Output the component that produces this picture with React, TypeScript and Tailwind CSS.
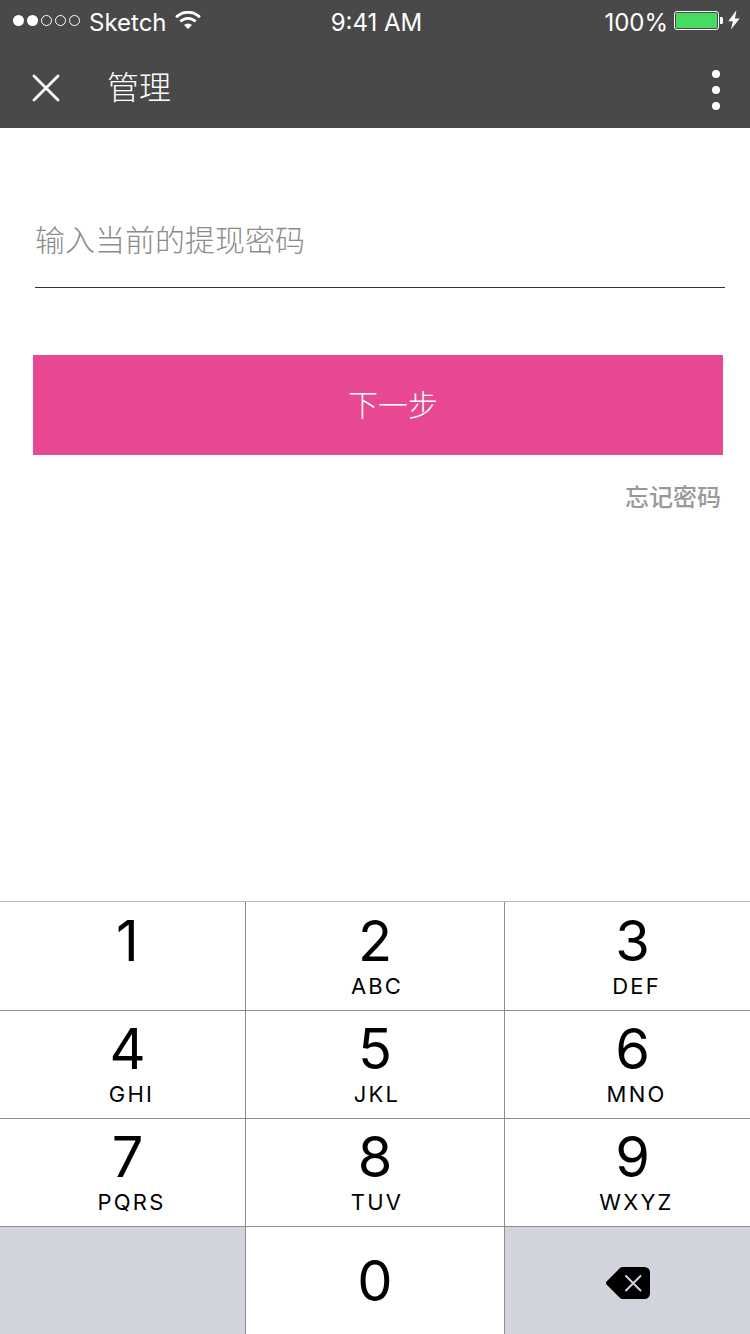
import React, { useState } from "react";

type KeyDef = { digit: string; letters?: string };

const KEYS: KeyDef[] = [
  { digit: "1" },
  { digit: "2", letters: "ABC" },
  { digit: "3", letters: "DEF" },
  { digit: "4", letters: "GHI" },
  { digit: "5", letters: "JKL" },
  { digit: "6", letters: "MNO" },
  { digit: "7", letters: "PQRS" },
  { digit: "8", letters: "TUV" },
  { digit: "9", letters: "WXYZ" },
];

function SignalDots() {
  return (
    <svg width="68" height="12" viewBox="0 0 68 12" aria-hidden="true">
      <circle cx="5.5" cy="6.5" r="5.5" fill="#fff" />
      <circle cx="19.5" cy="6.5" r="5.5" fill="#fff" />
      <circle cx="33.5" cy="6.5" r="5" fill="none" stroke="#fff" />
      <circle cx="47.5" cy="6.5" r="5" fill="none" stroke="#fff" />
      <circle cx="61.5" cy="6.5" r="5" fill="none" stroke="#fff" />
    </svg>
  );
}

function Wifi() {
  return (
    <svg width="26" height="19" viewBox="0 0 26 19" aria-hidden="true" fill="none" stroke="#fff">
      <path d="M1.200 6.200a16.800 16.800 0 0 1 23.600 0" strokeWidth="3" />
      <path d="M5.400 10.500a10.800 10.800 0 0 1 15.200 0" strokeWidth="2.800" />
      <path d="M13 18l-4-4a5.800 5.800 0 0 1 8 0z" fill="#fff" stroke="none" />
    </svg>
  );
}

function Battery() {
  return (
    <svg width="49" height="19" viewBox="0 0 49 19" aria-hidden="true">
      <rect x="0.5" y="0.5" width="44" height="18" rx="2.5" fill="none" stroke="#fff" />
      <rect x="2" y="2" width="41" height="15" rx="1" fill="#46dc61" />
      <path d="M46 6h1.500a1.500 1.500 0 0 1 1.500 1.500v4a1.500 1.500 0 0 1-1.500 1.500H46z" fill="#fff" />
    </svg>
  );
}

function Bolt() {
  return (
    <svg width="12" height="20" viewBox="0 0 12 20" aria-hidden="true">
      <path d="M8.400 0.300L0.300 11.200h4.600L2.900 19.600 11.700 8.400H7z" fill="#fff" />
    </svg>
  );
}

function StatusBar() {
  return (
    <div className="grid h-10 grid-cols-[1fr_auto_1fr] items-start pl-[13px] pr-[10px] text-2xl leading-8">
      <div className="flex items-start pt-[7px]">
        <div className="pt-[7px]">
          <SignalDots />
        </div>
        <span className="ml-2">Sketch</span>
        <div className="ml-2 pt-[4px]">
          <Wifi />
        </div>
      </div>
      <span className="pt-[7px]">9:41 AM</span>
      <div className="flex items-start justify-end pt-[7px]">
        <span>100%</span>
        <div className="ml-[6px] pt-[4px]">
          <Battery />
        </div>
        <div className="ml-[5px] pt-[3px]">
          <Bolt />
        </div>
      </div>
    </div>
  );
}

function Header() {
  return (
    <header className="bg-[#494949] text-white">
      <StatusBar />
      <div className="flex h-22 items-start pl-8 pr-[30px] pt-7">
        <button type="button" aria-label="关闭" className="mt-1.5 flex">
          <svg width="28" height="28" viewBox="0 0 28 28" aria-hidden="true">
            <path d="M2 2l24 24M26 2L2 26" stroke="#fff" strokeWidth="2.800" strokeLinecap="round" />
          </svg>
        </button>
        <h1 className="ml-[47px] text-[32px] leading-10 font-light">管理</h1>
        <button type="button" aria-label="更多" className="mt-0.5 ml-auto flex">
          <svg width="8" height="40" viewBox="0 0 8 40" aria-hidden="true" fill="#fff">
            <circle cx="4" cy="4" r="4" />
            <circle cx="4" cy="20" r="4" />
            <circle cx="4" cy="36" r="4" />
          </svg>
        </button>
      </div>
    </header>
  );
}

function Key({ def, column, onPress }: { def: KeyDef; column: number; onPress: (d: string) => void }) {
  const middle = column === 1;
  return (
    <button
      type="button"
      onClick={() => onPress(def.digit)}
      className={`flex flex-col items-center justify-end gap-px bg-white pb-3 text-black ${middle ? "" : "pl-[10px]"}`}
    >
      <span className="text-[56px] leading-[64px]">{def.digit}</span>
      <span className={`h-6 text-[22px] leading-6 tracking-widest ${middle ? "pl-1" : "pl-2"}`}>{def.letters}</span>
    </button>
  );
}

function Keypad({ onPress, onDelete }: { onPress: (d: string) => void; onDelete: () => void }) {
  return (
    <div className="border-t border-[#b9b9b9]">
      <div className="grid grid-cols-[245fr_258fr_245fr] grid-rows-[108px_107px_107px_107px] gap-px bg-[#8c8c8c]">
        {KEYS.map((k, i) => (
          <Key key={k.digit} def={k} column={i % 3} onPress={onPress} />
        ))}
        <div className="bg-[#d1d4dd]" />
        <button
          type="button"
          onClick={() => onPress("0")}
          className="flex items-center justify-center bg-white text-[56px] leading-[64px] text-black"
        >
          0
        </button>
        <button
          type="button"
          aria-label="删除"
          onClick={onDelete}
          className="flex items-center justify-center bg-[#d1d4dd] pt-1"
        >
          <svg width="44" height="32" viewBox="0 0 44 32" aria-hidden="true">
            <path
              d="M16.500 0H38.500A5.500 5.500 0 0 1 44 5.500V26.500A5.500 5.500 0 0 1 38.500 32H16.500Q15 32 14 31L0.600 17.400Q-0.600 16 0.600 14.600L14 1Q15 0 16.500 0Z"
              fill="#000"
            />
            <path d="M20 9l14.500 14.500M34.500 9L20 23.500" stroke="#d1d4dd" strokeWidth="2" strokeLinecap="round" />
          </svg>
        </button>
      </div>
    </div>
  );
}

export default function App() {
  const [password, setPassword] = useState("");

  return (
    <div className="flex min-h-screen flex-col bg-white font-['Inter','Noto_Sans_CJK_SC',sans-serif]">
      <Header />
      <main className="flex-1">
        <form onSubmit={(e) => e.preventDefault()}>
          <div className="pt-16 pl-[35px] pr-[25px]">
            <input
              type="password"
              aria-label="输入当前的提现密码"
              placeholder="输入当前的提现密码"
              value={password}
              onChange={(e) => setPassword(e.target.value)}
              className="block h-24 w-full border-b border-[#333333] text-[30px] font-light text-[#333333] outline-none placeholder:text-[#8c8c8c]"
            />
          </div>
          <div className="pt-[67px] pl-[33px] pr-[27px]">
            <button
              type="submit"
              className="block h-[100px] w-full bg-[#e84791] pl-[30px] text-[30px] font-light text-white"
            >
              下一步
            </button>
            <div className="flex justify-end pt-[27px] pr-[2px]">
              <a href="#forgot" className="text-2xl leading-8 font-medium text-[#999999]">
                忘记密码
              </a>
            </div>
          </div>
        </form>
      </main>
      <Keypad onPress={(d) => setPassword((p) => p + d)} onDelete={() => setPassword((p) => p.slice(0, -1))} />
    </div>
  );
}
